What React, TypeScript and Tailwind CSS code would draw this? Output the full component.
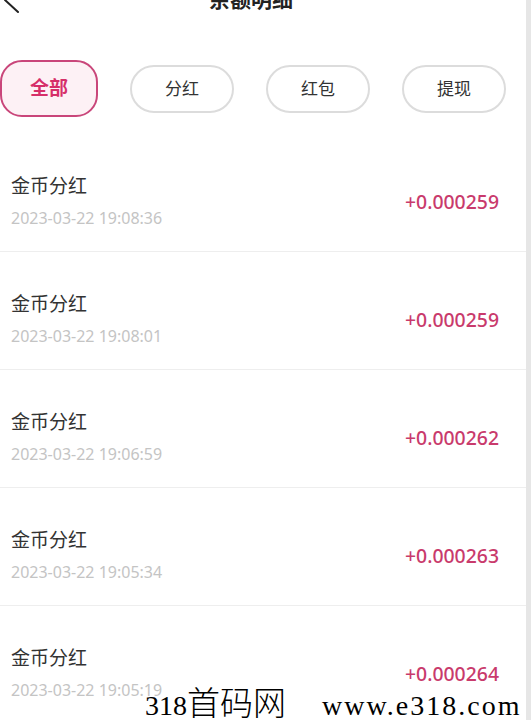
import React, { useState } from 'react';

const tabs = ['全部', '分红', '红包', '提现'];

const records = [
  { title: '金币分红', time: '2023-03-22 19:08:36', amount: '+0.000259' },
  { title: '金币分红', time: '2023-03-22 19:08:01', amount: '+0.000259' },
  { title: '金币分红', time: '2023-03-22 19:06:59', amount: '+0.000262' },
  { title: '金币分红', time: '2023-03-22 19:05:34', amount: '+0.000263' },
  { title: '金币分红', time: '2023-03-22 19:05:19', amount: '+0.000264' },
];

const App: React.FC = () => {
  const [active, setActive] = useState('全部');

  return (
    <div className="relative flex h-[720px] w-[531px] overflow-hidden bg-white font-['Noto_Sans','Noto_Sans_CJK_SC',sans-serif] text-[#333]">
      <div className="flex-1">
        {/* Header (scrolled up, partly hidden) */}
        <header className="-mt-[20px] grid h-[40px] grid-cols-[40px_1fr_64px] items-center">
          <svg width="24" height="28" viewBox="0 0 24 28" fill="none">
            <polyline points="18,2 5,14 18,26" stroke="#222" strokeWidth="2" strokeLinecap="round" strokeLinejoin="round" />
          </svg>
          <h1 className="text-center text-[21px] font-bold text-[#222]">余额明细</h1>
          <div />
        </header>

        {/* Filter tabs */}
        <div className="mt-[40px] flex h-[57px] items-center gap-[32px]">
          {tabs.map((t) =>
            active === t ? (
              <button
                key={t}
                onClick={() => setActive(t)}
                className="h-[57px] w-[98px] shrink-0 rounded-[22px] border-2 border-[#c9467a] bg-[#fdf1f5] text-[19px] font-bold text-[#d62f69]"
              >
                {t}
              </button>
            ) : (
              <button
                key={t}
                onClick={() => setActive(t)}
                className="h-[48px] w-[104px] shrink-0 rounded-full border-2 border-[#dcdcdc] bg-white text-[17px] text-[#333]"
              >
                {t}
              </button>
            )
          )}
        </div>

        {/* Records */}
        <div className="mt-[17px]">
          {records.map((r, i) => (
            <div key={i} className="flex items-center justify-between border-b border-[#eeeeee] pt-[38px] pb-[19px] pl-[11px] pr-[27px]">
              <div>
                <div className="text-[19px] leading-[28px] text-[#333]">{r.title}</div>
                <div className="mt-[4px] text-[16px] leading-[28px] text-[#c4c4c4]">{r.time}</div>
              </div>
              <div className="text-[19.4px] font-medium text-[#c93a6c]">{r.amount}</div>
            </div>
          ))}
        </div>
      </div>

      {/* Scrollbar track */}
      <div className="w-[5px] shrink-0 bg-[#e6e6e6]" />

      {/* Watermark */}
      <div className="pointer-events-none absolute left-[145px] top-[682px] flex items-baseline whitespace-nowrap leading-[38px] text-black">
        <span className="font-['Liberation_Serif',serif] text-[28px]">318</span>
        <span className="font-['Noto_Sans_CJK_SC',sans-serif] text-[33px] font-light">首码网</span>
        <span className="ml-[36px] font-['Liberation_Serif',serif] text-[28px] tracking-[2px]">www.e318.com</span>
      </div>
    </div>
  );
};

export default App;
